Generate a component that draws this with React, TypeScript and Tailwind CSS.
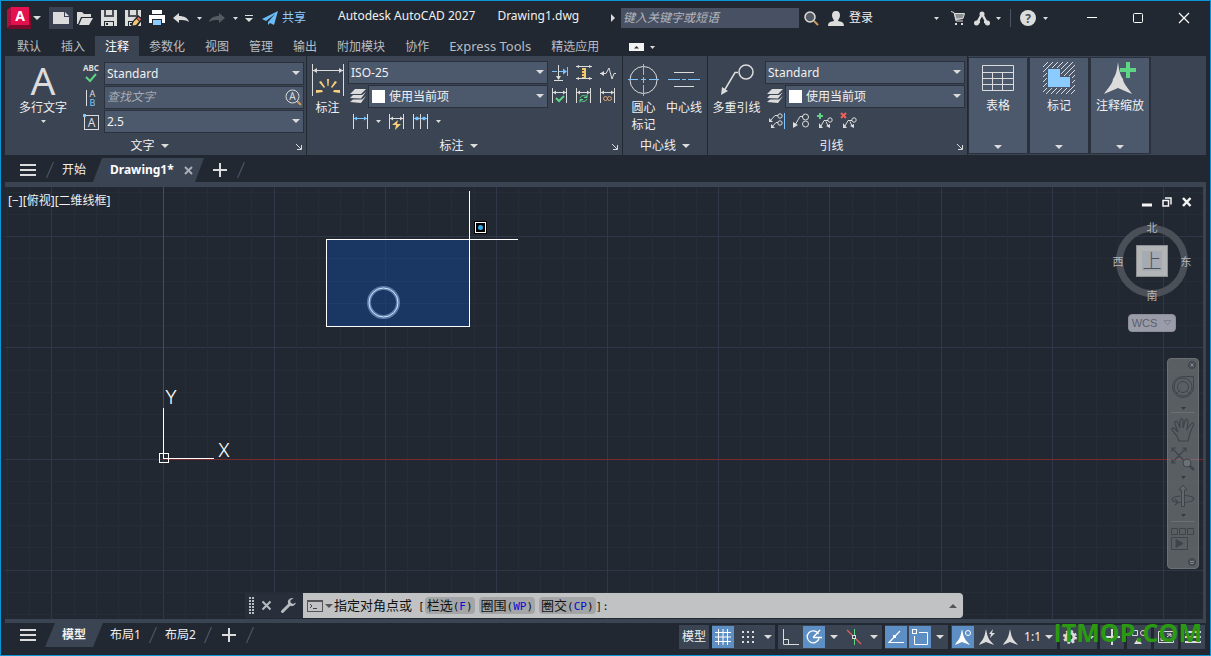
import type { ReactNode } from 'react';

type IconProps = { w: number; h: number; children: ReactNode; className?: string };

const Icon = ({ w, h, children, className }: IconProps) => (
    <svg
        width={w}
        height={h}
        viewBox={`0 0 ${w} ${h}`}
        fill="none"
        stroke="#dcdcdc"
        aria-hidden="true"
        className={`shrink-0 overflow-visible ${className ?? ''}`}>
        {children}
    </svg>
);

const Caret = ({ small = false }: { small?: boolean }) => (
    <svg width={small ? 5 : 8} height={small ? 3 : 4} viewBox="0 0 8 4" preserveAspectRatio="none" aria-hidden="true" className="shrink-0">
        <path d="M0 0H8L4 4Z" fill="#dcdcdc" />
    </svg>
);

type BtnProps = { label: string; className: string; children: ReactNode };

const Btn = ({ label, className, children }: BtnProps) => (
    <button type="button" aria-label={label} className={`flex shrink-0 items-center justify-center ${className}`}>
        {children}
    </button>
);

/* ---------- title bar ---------- */

const Floppy = () => (
    <>
        <path d="M0 0H16V16H0Z" fill="#dcdcdc" stroke="none" />
        <path d="M3 0H13V7H3Z" fill="#4a4f57" stroke="none" />
        <path d="M5 0H11V5H5Z" fill="#dcdcdc" stroke="none" />
        <path d="M3 11H13V16H3Z" fill="#222831" stroke="none" />
        <path d="M4 12H12V16H4Z" fill="#dcdcdc" stroke="none" />
        <path d="M5 13H7V15H5Z" fill="#222831" stroke="none" />
    </>
);

const TitleBar = () => (
    <header className="flex h-[34px] shrink-0 items-center pl-1.5 pr-[3px] text-[#f0f0f0]">
        <Btn label="应用程序菜单" className="h-6 w-6">
            <Icon w={24} h={22}>
                <path d="M0 3L4 0V18L0 21Z" fill="#b01040" stroke="none" />
                <path d="M0 21L4 18H22L24 2V22H2Z" fill="#7c0a2c" stroke="none" />
                <path d="M4 0H22V18H4Z" fill="#e51050" stroke="none" />
                <text x="13" y="14" textAnchor="middle" fontFamily="Noto Sans" fontSize="14" fontWeight="700" fill="#fff" stroke="none">A</text>
            </Icon>
        </Btn>
        <Btn label="菜单" className="w-3"><Caret /></Btn>
        <Btn label="新建" className="ml-1.5 h-[22px] w-6 bg-[#3a4252]">
            <Icon w={16} h={12}>
                <path d="M0 0H11V5H16V12H0Z" fill="#dcdcdc" stroke="none" />
                <path d="M12 0L16 4H12Z" fill="#dcdcdc" stroke="none" />
            </Icon>
        </Btn>
        <Btn label="打开" className="h-6 w-6">
            <Icon w={16} h={13}>
                <path d="M0 0H5L7 2H14V5H4L1 12H0Z" fill="#dcdcdc" stroke="none" />
                <path d="M5 6H16L12 13H2Z" fill="#dcdcdc" stroke="none" />
            </Icon>
        </Btn>
        <Btn label="保存" className="h-6 w-6"><Icon w={16} h={16}><Floppy /></Icon></Btn>
        <Btn label="另存为" className="h-6 w-6">
            <Icon w={16} h={16}>
                <Floppy />
                <path d="M6 17L7 12L13 5L18 9L12 17Z" fill="#222831" stroke="none" />
                <path d="M7.500 15.500L8.500 12L11.500 9L14 11.500L11 15Z" fill="#f5c76b" stroke="none" />
                <path d="M12 8.500L13.500 7L16 9.500L14.500 11Z" fill="#e46a5c" stroke="none" />
            </Icon>
        </Btn>
        <Btn label="打印" className="h-6 w-6">
            <Icon w={16} h={16}>
                <path d="M3 0H13V4H3Z" fill="#fff" stroke="none" />
                <path d="M0 5H16V13H0Z" fill="#fff" stroke="none" />
                <path d="M3 9H13V16H3Z" fill="#222831" stroke="none" />
                <path d="M4 10H12V15H4Z" fill="#8ccbff" stroke="none" />
            </Icon>
        </Btn>
        <Btn label="放弃" className="h-6 w-6">
            <Icon w={16} h={11}>
                <path d="M0 5L6 0V3C11 3 15 5 16 9C13 7 10 7 6 7V10Z" fill="#dcdcdc" stroke="none" />
            </Icon>
        </Btn>
        <Btn label="放弃列表" className="w-3"><Caret small /></Btn>
        <Btn label="重做" className="h-6 w-6">
            <Icon w={16} h={11}>
                <path d="M16 5L10 0V3C5 3 1 5 0 9C3 7 6 7 10 7V10Z" fill="#565b63" stroke="none" />
            </Icon>
        </Btn>
        <Btn label="重做列表" className="w-3"><Caret small /></Btn>
        <Btn label="自定义快速访问工具栏" className="w-4">
            <Icon w={8} h={7}>
                <path d="M0 .5H8" />
                <path d="M0 3H8L4 7Z" fill="#dcdcdc" stroke="none" />
            </Icon>
        </Btn>
        <button type="button" className="ml-[5px] flex shrink-0 items-center gap-1 text-xs text-[#8ccbff]">
            <Icon w={16} h={14}>
                <path d="M16 0L0 8L4 10L13 3L6 11L6 14L8 12L12 14Z" fill="#6bbcf5" stroke="none" />
            </Icon>
            共享
        </button>
        <h1 className="flex min-w-0 flex-1 gap-[22px] overflow-hidden whitespace-nowrap pb-1 pl-8 text-xs">
            <span>Autodesk AutoCAD 2027</span>
            <span>Drawing1.dwg</span>
        </h1>
        <Btn label="折叠搜索" className="w-4">
            <Icon w={4} h={8}><path d="M0 0L4 4L0 8Z" fill="#dcdcdc" stroke="none" /></Icon>
        </Btn>
        <input
            type="text"
            aria-label="搜索"
            placeholder="键入关键字或短语"
            className="h-5 w-[178px] shrink-0 bg-[#485063] px-0.5 pb-0.5 text-xs italic placeholder:text-[#b4b8be]"
        />
        <Btn label="开始搜索" className="h-6 w-6">
            <Icon w={14} h={14}>
                <path d="M10 10L14 14" stroke="#d09a5a" strokeWidth="2" />
                <circle cx="6" cy="6" r="5" fill="#555b64" strokeWidth="1.500" />
            </Icon>
        </Btn>
        <button type="button" className="ml-[5px] flex shrink-0 items-center gap-[5px] text-xs">
            <Icon w={16} h={15}>
                <path d="M8 0C11 0 12 2 12 4.500C12 7 10 9 10 10C13 10.500 16 11 16 15H0C0 11 3 10.500 6 10C6 9 4 7 4 4.500C4 2 5 0 8 0Z" fill="#dcdcdc" stroke="none" />
            </Icon>
            登录
        </button>
        <Btn label="登录菜单" className="ml-[57px] w-3"><Caret small /></Btn>
        <Btn label="应用商店" className="ml-1 h-6 w-6">
            <Icon w={14} h={14}>
                <path d="M0 .5L3 1.500L5 10H12M5 8.500L12 7.500" />
                <path d="M3.500 2.500H13.500L12 7.500L5 8Z" fill="#8b8f94" />
                <path d="M4 12H6V14H4ZM10 12H12V14H10Z" fill="#dcdcdc" stroke="none" />
            </Icon>
        </Btn>
        <Btn label="Autodesk App" className="h-6 w-6">
            <Icon w={16} h={15}>
                <path d="M8 3L3 12M8 3L13 12M3 11H6M10 11H13" strokeWidth="2.500" />
                <g fill="#dcdcdc" stroke="none">
                    <circle cx="8" cy="3" r="2.500" />
                    <circle cx="2.500" cy="12" r="2.500" />
                    <circle cx="13.500" cy="12" r="2.500" />
                </g>
            </Icon>
        </Btn>
        <Btn label="App 菜单" className="w-2"><Caret small /></Btn>
        <div className="ml-2 mr-[5px] h-[18px] w-px bg-[#4c5566]" />
        <Btn label="帮助" className="h-6 w-6">
            <Icon w={16} h={16}>
                <circle cx="8" cy="8" r="8" fill="#dcdcdc" stroke="none" />
                <text x="8" y="12.500" textAnchor="middle" fontFamily="Noto Sans" fontSize="12" fontWeight="700" fill="#4a4f57" stroke="none">?</text>
            </Icon>
        </Btn>
        <Btn label="帮助菜单" className="w-2.5"><Caret small /></Btn>
        <div className="ml-[19px] flex">
            <Btn label="最小化" className="h-8 w-[46px]">
                <Icon w={10} h={10}><path d="M0 4.500H10" stroke="#fff" /></Icon>
            </Btn>
            <Btn label="最大化" className="h-8 w-[46px]">
                <Icon w={10} h={10}><rect x=".5" y=".5" width="9" height="9" rx="1" stroke="#fff" /></Icon>
            </Btn>
            <Btn label="关闭" className="h-8 w-[46px]">
                <Icon w={10} h={10}><path d="M0 0L10 10M10 0L0 10" stroke="#fff" strokeWidth="1.200" /></Icon>
            </Btn>
        </div>
    </header>
);

/* ---------- ribbon ---------- */

const ribbonTabs = ['默认', '插入', '注释', '参数化', '视图', '管理', '输出', '附加模块', '协作', 'Express Tools', '精选应用'];

const RibbonTabs = () => (
    <nav className="flex h-[21px] shrink-0 items-end pl-1.5 text-xs">
        {ribbonTabs.map((tab) => (
            <button
                key={tab}
                type="button"
                className={`h-5 shrink-0 px-2.5 pt-0.5 ${tab === '注释' ? 'bg-[#3b4453] text-white' : 'text-[#b9bdc3]'} ${tab === 'Express Tools' ? 'text-[13px]' : ''}`}>
                {tab}
            </button>
        ))}
        <Btn label="最小化功能区" className="ml-5 h-5 gap-1.5 pt-0.5">
            <Icon w={15} h={8}>
                <path d="M0 0H15V8H0Z" fill="#f4f4f4" stroke="none" />
                <path d="M5 5.500H10L7.500 3Z" fill="#333" stroke="none" />
            </Icon>
            <Caret small />
        </Btn>
    </nav>
);

type ComboProps = { label: string; value: string; swatch?: boolean; className: string };

const Combo = ({ label, value, swatch = false, className }: ComboProps) => (
    <div className={`relative h-[23px] shrink-0 ${className}`}>
        <select
            aria-label={label}
            className={`block h-full w-full appearance-none border border-[#2a313d] bg-[#4c586b] text-xs text-[#f0f0f0] ${swatch ? 'pl-5' : 'pl-0.5'}`}>
            <option>{value}</option>
        </select>
        {swatch && <span className="pointer-events-none absolute left-1 top-[5px] h-[13px] w-[13px] bg-white" />}
        <span className="pointer-events-none absolute right-1 top-[9px] flex"><Caret /></span>
    </div>
);

type PanelProps = { title: string; menu?: boolean; launcher?: boolean; className: string; children: ReactNode };

const Panel = ({ title, menu = false, launcher = false, className, children }: PanelProps) => (
    <section className={`flex shrink-0 flex-col border-r border-[#222831] ${className}`}>
        <div className="flex h-20 pt-[5px]">{children}</div>
        <div className={`relative flex flex-1 items-center justify-center ${launcher ? 'pr-3' : ''}`}>
            <button type="button" className="flex items-center gap-1.5 text-xs text-[#f0f0f0]">
                {title}
                {menu && <Caret />}
            </button>
            {launcher && (
                <button type="button" aria-label={`${title}设置`} className="absolute right-1 top-2">
                    <Icon w={6} h={6}><path d="M0 0L5 5M5.500 1V5.500H1" /></Icon>
                </button>
            )}
        </div>
    </section>
);

type BigProps = { lines: string[]; className: string; icon: ReactNode; children?: ReactNode };

const BigButton = ({ lines, className, icon, children }: BigProps) => (
    <button type="button" className={`flex shrink-0 flex-col items-center whitespace-nowrap text-xs leading-[17px] text-[#f0f0f0] ${className}`}>
        <span className="flex h-[38px] items-center">{icon}</span>
        {lines.map((line) => <span key={line}>{line}</span>)}
        {children}
    </button>
);

const Layers = () => (
    <Icon w={16} h={16}>
        <path d="M5 0H16L11 5H0ZM0 9L3 6H12L16 3L11 9.500ZM0 13L3 10.500H12L16 7L11 14Z" fill="#dcdcdc" stroke="none" />
    </Icon>
);

/* extension lines with the arrowed dimension line between them */
const DimFrame = ({ color = '#dcdcdc' }: { color?: string }) => (
    <>
        <path d="M.5 0V15M14.500 0V15" />
        <path d="M1 4.500H14" stroke={color} />
        <path d="M1 4.500L4 2.500V6.500ZM14 4.500L11 2.500V6.500Z" fill={color} stroke="none" />
    </>
);

const TextPanel = () => (
    <Panel title="文字" menu launcher className="w-[302px]">
        <BigButton
            lines={['多行文字']}
            className="w-[76px]"
            icon={
                <Icon w={30} h={32}>
                    <text x="15" y="31" textAnchor="middle" fontFamily="Noto Sans" fontSize="39" fill="#dcdcdc" stroke="none">A</text>
                </Icon>
            }>
            <span className="flex h-2.5 items-center"><Caret small /></span>
        </BigButton>
        <div className="flex flex-col gap-px pt-px">
            <div className="flex items-center gap-1">
                <Btn label="拼写检查" className="w-[19px]">
                    <Icon w={18} h={18}>
                        <text x="9" y="6" textAnchor="middle" fontFamily="Noto Sans" fontSize="8" fontWeight="700" fill="#dcdcdc" stroke="none">ABC</text>
                        <path d="M4 12L8 16L14 9" stroke="#5ed584" strokeWidth="2" />
                    </Icon>
                </Btn>
                <Combo label="文字样式" value="Standard" className="w-[200px]" />
            </div>
            <div className="flex items-center gap-1">
                <Btn label="文字对齐" className="w-[19px]">
                    <Icon w={12} h={16}>
                        <path d="M1.500 0V16" />
                        <text x="7.500" y="7" textAnchor="middle" fontFamily="Noto Sans" fontSize="9" fill="#dcdcdc" stroke="none">A</text>
                        <text x="7.500" y="16" textAnchor="middle" fontFamily="Noto Sans" fontSize="9" fill="#7cc4ff" stroke="none">B</text>
                    </Icon>
                </Btn>
                <div className="relative h-[23px] w-[200px]">
                    <input
                        type="text"
                        aria-label="查找文字"
                        placeholder="查找文字"
                        className="block h-full w-full border border-[#2a313d] bg-[#4c586b] pb-0.5 pl-0.5 text-xs italic text-[#f0f0f0] placeholder:text-[#a5abb4]"
                    />
                    <button type="button" aria-label="查找" className="absolute right-0.5 top-[3px]">
                        <Icon w={17} h={17}>
                            <path d="M12 12L16 16" stroke="#d09a5a" strokeWidth="2" />
                            <circle cx="7.500" cy="7.500" r="6.500" />
                            <text x="7.500" y="11" textAnchor="middle" fontFamily="Noto Sans" fontSize="10" fill="#dcdcdc" stroke="none">A</text>
                        </Icon>
                    </button>
                </div>
            </div>
            <div className="flex items-center gap-1">
                <Btn label="注释性" className="w-[19px]">
                    <Icon w={16} h={16}>
                        <rect x="1.500" y="1.500" width="14" height="14" />
                        <text x="8.500" y="13" textAnchor="middle" fontFamily="Noto Sans" fontSize="12" fill="#dcdcdc" stroke="none">A</text>
                        <path d="M0 0H3V3H0Z" fill="#7cc4ff" stroke="none" />
                    </Icon>
                </Btn>
                <Combo label="文字高度" value="2.5" className="w-[200px]" />
            </div>
        </div>
    </Panel>
);

const DimensionPanel = () => (
    <Panel title="标注" menu launcher className="w-[316px]">
        <BigButton
            lines={['标注']}
            className="w-[41px]"
            icon={
                <Icon w={32} h={32}>
                    <path d="M.5 0V32M31.500 0V32M1 6.500H31" />
                    <path d="M1 6.500L5 4V9ZM31 6.500L27 4V9Z" fill="#dcdcdc" stroke="none" />
                    <g fill="#f8cf7a" stroke="none">
                        <path d="M15 15H17L16.500 22H15.500ZM7 18L9 17L13 23L12 24ZM25 18L23 17L19 23L20 24ZM4 26L10 26L11 28L4 29ZM28 26L22 26L21 28L28 29Z" />
                    </g>
                </Icon>
            }
        />
        <div className="flex flex-col gap-px">
            <Combo label="标注样式" value="ISO-25" className="w-[200px]" />
            <div className="flex items-center gap-0.5">
                <Btn label="标注图层" className="ml-0.5 w-4"><Layers /></Btn>
                <Combo label="图层" value="使用当前项" swatch className="w-[180px]" />
            </div>
            <div className="flex h-6 items-center pl-1">
                <Btn label="线性" className="w-4"><Icon w={15} h={15}><DimFrame color="#7cc4ff" /></Icon></Btn>
                <Btn label="标注类型" className="w-5"><Caret small /></Btn>
                <Btn label="快速标注" className="w-4">
                    <Icon w={15} h={15}>
                        <DimFrame />
                        <path d="M9 6L3 11H7L6 16L12 10H8Z" fill="#f8cf7a" stroke="none" />
                    </Icon>
                </Btn>
                <Btn label="连续" className="ml-2 w-4">
                    <Icon w={15} h={15}>
                        <DimFrame color="#7cc4ff" />
                        <path d="M7.500 0V15" />
                        <path d="M4 2.500L7 4.500L4 6.500ZM11 2.500L8 4.500L11 6.500Z" fill="#7cc4ff" stroke="none" />
                    </Icon>
                </Btn>
                <Btn label="连续类型" className="w-5"><Caret small /></Btn>
            </div>
        </div>
        <div className="grid h-[46px] grid-cols-3 grid-rows-2 items-center">
            <Btn label="打断" className="w-6">
                <Icon w={16} h={16}>
                    <path d="M0 6.500H5M7 6.500H12M15.500 2V11" stroke="#7cc4ff" />
                    <path d="M11 3.500L15 6.500L11 9.500Z" fill="#7cc4ff" stroke="none" />
                    <path d="M6.500 0V12M2 15.500H11" />
                    <path d="M4 11H9L6.500 15Z" fill="#dcdcdc" stroke="none" />
                </Icon>
            </Btn>
            <Btn label="调整间距" className="w-6">
                <Icon w={16} h={16}>
                    <path d="M0 1.500H16M0 13.500H16" />
                    <path d="M0 1.500L3 0V3ZM16 1.500L13 0V3ZM0 13.500L3 12V15ZM16 13.500L13 12V15Z" fill="#dcdcdc" stroke="none" />
                    <path d="M6 3H10V13H6Z" fill="#f5c76b" stroke="none" />
                    <path d="M6 5.500H8M6 8.500H8M6 11.500H8" stroke="#3b4453" />
                </Icon>
            </Btn>
            <Btn label="折弯标注" className="w-6">
                <Icon w={16} h={14}>
                    <path d="M0 7.500H6L9 2L12 13L14 7.500H16" />
                    <path d="M0 7.500L4 5V10Z" fill="#dcdcdc" stroke="none" />
                </Icon>
            </Btn>
            <Btn label="检验" className="w-6">
                <Icon w={16} h={16}><DimFrame /><path d="M4 10L7 13L12 8" stroke="#5ed584" strokeWidth="2" /></Icon>
            </Btn>
            <Btn label="更新" className="w-6">
                <Icon w={16} h={16}>
                    <DimFrame />
                    <path d="M4 10C5 7 9 7 11 9M11 11C10 14 6 14 4 12M11 6.500V9.500H8M4 14.500V11.500H7" stroke="#5ed584" />
                </Icon>
            </Btn>
            <Btn label="重新关联" className="w-6">
                <Icon w={16} h={16}>
                    <DimFrame />
                    <circle cx="5.500" cy="10.500" r="2" stroke="#e0a070" />
                    <circle cx="9.500" cy="10.500" r="2" stroke="#e0a070" />
                </Icon>
            </Btn>
        </div>
    </Panel>
);

const CenterPanel = () => (
    <Panel title="中心线" menu className="w-[85px]">
        <BigButton
            lines={['圆心', '标记']}
            className="w-[41px]"
            icon={
                <Icon w={32} h={32}>
                    <circle cx="15.500" cy="16" r="13.500" />
                    <path d="M15.500 0V11M15.500 13V19M15.500 21V32M0 15.500H10M13 15.500H18M21 15.500H31" stroke="#7cc4ff" />
                </Icon>
            }
        />
        <BigButton
            lines={['中心线']}
            className="w-10"
            icon={
                <Icon w={32} h={32}>
                    <path d="M6 8.500H26M6 22.500H26" />
                    <path d="M0 15.500H12M14 15.500H18M20 15.500H32" stroke="#7cc4ff" />
                </Icon>
            }
        />
    </Panel>
);

const LeaderPanel = () => (
    <Panel title="引线" launcher className="w-[260px]">
        <BigButton
            lines={['多重引线']}
            className="w-[57px]"
            icon={
                <Icon w={32} h={32}>
                    <path d="M17 8.500H14L3 27" strokeWidth="1.500" />
                    <circle cx="25" cy="8" r="7" strokeWidth="1.500" />
                    <path d="M1 23L7 27L0 31Z" fill="#dcdcdc" stroke="none" />
                </Icon>
            }
        />
        <div className="flex flex-col gap-px">
            <Combo label="多重引线样式" value="Standard" className="w-[200px]" />
            <div className="flex items-center gap-0.5">
                <Btn label="引线图层" className="ml-0.5 w-4"><Layers /></Btn>
                <Combo label="图层" value="使用当前项" swatch className="w-[180px]" />
            </div>
            <div className="flex h-6 items-center gap-2 pl-1">
                <Btn label="对齐" className="w-4">
                    <Icon w={16} h={16}>
                        <path d="M9 2.500H6L1 8M9 9.500H7L3 14" />
                        <circle cx="11" cy="3" r="2.200" />
                        <circle cx="11" cy="10" r="2.200" />
                        <path d="M0 5V9H4ZM2 11V15H6Z" fill="#dcdcdc" stroke="none" />
                        <path d="M15.500 0V16" stroke="#7cc4ff" />
                    </Icon>
                </Btn>
                <Btn label="合并" className="w-4">
                    <Icon w={16} h={16}>
                        <path d="M10 3.500H7L2 12" />
                        <circle cx="12.500" cy="4" r="3" />
                        <circle cx="12.500" cy="11" r="3" />
                        <path d="M0 9L5 12L0 15Z" fill="#dcdcdc" stroke="none" />
                    </Icon>
                </Btn>
                <Btn label="添加引线" className="w-4">
                    <Icon w={16} h={16}>
                        <path d="M11 7.500H7L4 13M9 8.500L11 13" />
                        <circle cx="13" cy="7" r="2.200" />
                        <path d="M2 10V15H6ZM9 13L13 11V15Z" fill="#dcdcdc" stroke="none" />
                        <path d="M3 0V6M0 3H6" stroke="#5ed584" strokeWidth="2" />
                    </Icon>
                </Btn>
                <Btn label="删除引线" className="w-4">
                    <Icon w={16} h={16}>
                        <path d="M11 7.500H7L4 13M9 8.500L11 13" />
                        <circle cx="13" cy="7" r="2.200" />
                        <path d="M2 10V15H6ZM9 13L13 11V15Z" fill="#dcdcdc" stroke="none" />
                        <path d="M0 0L5 5M5 0L0 5" stroke="#f0605c" strokeWidth="2" />
                    </Icon>
                </Btn>
            </div>
        </div>
    </Panel>
);

const scalePath = 'M14 0C15 8 16 13 19 17C19 21 24 26 28 32L14 26L0 32C4 26 9 21 9 17C12 13 13 8 14 0Z';

const collapsed = [
    {
        name: '表格',
        icon: (
            <Icon w={32} h={32}>
                <path d="M.5 3.500H31.500V28.500H.5ZM.5 10.500H31.500M.5 16.500H31.500M.5 22.500H31.500M10.500 10.500V28.500M20.500 10.500V28.500" />
            </Icon>
        ),
    },
    {
        name: '标记',
        icon: (
            <Icon w={32} h={32}>
                <defs>
                    <pattern id="hatch" width="5" height="5" patternUnits="userSpaceOnUse">
                        <path d="M0 5L5 0" stroke="#dcdcdc" />
                    </pattern>
                </defs>
                <rect width="32" height="32" fill="url(#hatch)" stroke="none" />
                <path d="M4 6H18V14H29V26H4Z" fill="#4c586b" stroke="none" />
                <path d="M5 7H17V15H27V25H5Z" fill="#8ccbff" stroke="none" />
            </Icon>
        ),
    },
    {
        name: '注释缩放',
        icon: (
            <Icon w={32} h={32}>
                <path d={scalePath} fill="#dcdcdc" stroke="none" />
                <path d="M22 0H26V6H32V10H26V16H22V10H16V6H22Z" fill="#5ed584" stroke="none" />
            </Icon>
        ),
    },
];

const Ribbon = () => (
    <div className="mx-1 flex h-[99px] shrink-0 bg-[#3b4453]">
        <TextPanel />
        <DimensionPanel />
        <CenterPanel />
        <LeaderPanel />
        {collapsed.map(({ name, icon }) => (
            <button
                key={name}
                type="button"
                className="mt-px flex h-[97px] w-[61px] shrink-0 flex-col items-center border border-r-2 border-[#2a313d] bg-[#4c586b] py-1 text-xs text-[#f0f0f0]">
                {icon}
                <span className="mt-1 whitespace-nowrap">{name}</span>
                <span className="mt-auto flex"><Caret /></span>
            </button>
        ))}
    </div>
);

/* ---------- tab strips above and below the drawing ---------- */

const Slash = () => (
    <Icon w={8} h={16}><path d="M.5 16L7.500 0" stroke="#4a5261" strokeWidth="1.200" /></Icon>
);

const Hamburger = () => (
    <Icon w={16} h={12}><path d="M0 1H16M0 6H16M0 11H16" strokeWidth="2" /></Icon>
);

const Plus = () => (
    <Icon w={14} h={14}><path d="M7 0V14M0 7H14" strokeWidth="2" /></Icon>
);

const FileTabs = () => (
    <nav className="flex h-[27px] shrink-0 items-end pl-[19px] text-xs">
        <div className="flex h-6 items-center">
            <Btn label="文件菜单" className="mr-2.5 w-4"><Hamburger /></Btn>
            <Slash />
            <button type="button" className="ml-2 mr-[7px] text-[#f0f0f0]">开始</button>
        </div>
        <div className="flex h-6 w-[111px] items-center bg-[#3b4453] pl-[17px] text-white [clip-path:polygon(9px_0,100%_0,102px_100%,0_100%)]">
            <button type="button" className="w-[72px] text-left font-bold">Drawing1*</button>
            <Btn label="关闭图形" className="h-4 w-3">
                <Icon w={9} h={9}><path d="M1 1L8 8M8 1L1 8" stroke="#a9aeb8" strokeWidth="2" /></Icon>
            </Btn>
        </div>
        <div className="flex h-6 items-center">
            <Btn label="新图形" className="ml-[9px] mr-2.5 w-3.5"><Plus /></Btn>
            <Slash />
        </div>
    </nav>
);

/* ---------- model space ---------- */

const origin = { x: 158, y: 272 };
const minorStep = 22.23;
const steps = Array.from({ length: 140 }, (_, i) => i - 20);

const ModelSpace = () => (
    <svg className="absolute inset-0 h-full w-full" fill="none" aria-hidden="true">
        <g shapeRendering="crispEdges">
            {steps.map((i) => {
                const x = Math.floor(origin.x + i * minorStep) + 0.5;
                const y = Math.floor(origin.y + i * minorStep) + 0.5;
                const color = i % 5 === 0 ? '#2f3748' : '#262d37';
                return (
                    <g key={i} stroke={color}>
                        <line x1={x} y1="0" x2={x} y2="100%" />
                        <line x1="0" y1={y} x2="100%" y2={y} />
                    </g>
                );
            })}
            <line x1="158.5" y1="0" x2="158.5" y2="221" stroke="#1f6a26" />
            <line x1="158" y1="272.5" x2="100%" y2="272.5" stroke="#7a2a2e" />
            <path d="M158.500 221V271.500H209M154.500 266.500H163.500V275.500H154.500Z" stroke="#fff" />
            <rect x="321.500" y="52.500" width="143" height="87" fill="#1a3763" stroke="#fff" />
            <path d="M380.500 53V139M322 71.500H464M322 94.500H464M322 116.500H464" stroke="#203c69" />
            <path d="M464.500 4V53M464 52.500H513" stroke="#fff" />
            <rect x="469" y="34" width="13" height="13" fill="#000" />
            <rect x="470.500" y="35.500" width="10" height="10" stroke="#fff" />
        </g>
        <circle cx="475.500" cy="40.500" r="2.500" fill="#36a9e1" />
        <circle cx="378.500" cy="115.500" r="14.500" stroke="#5b7cab" strokeWidth="4" />
        <circle cx="378.500" cy="115.500" r="14.500" stroke="#d4e4fa" />
        <g fontFamily="Inter" fontSize="18" fontWeight="300" fill="#fff" textAnchor="middle">
            <text x="166" y="217">Y</text>
            <text x="219" y="270">X</text>
        </g>
    </svg>
);

const ViewCube = () => (
    <div className="absolute right-2.5 top-[33px] flex flex-col items-center gap-3">
        <svg width="82" height="82" fontFamily="'Noto Sans CJK SC'" fontSize="11" textAnchor="middle" fill="#b4b6b8" className="overflow-visible">
            <circle cx="41" cy="41" r="32.500" fill="none" stroke="#4a4f58" strokeWidth="7" />
            <rect x="25.500" y="25.500" width="31" height="31" fill="#b3b4b5" stroke="#8c8e90" />
            <rect x="31" y="31" width="20" height="20" fill="#a6abb3" />
            <text x="41" y="48" fontSize="19" fontWeight="300" fill="#4a525e">上</text>
            <text x="41" y="12">北</text>
            <text x="41" y="80">南</text>
            <text x="7" y="46">西</text>
            <text x="75" y="46">东</text>
        </svg>
        <button type="button" className="flex h-[18px] w-12 items-center justify-center gap-1.5 rounded border border-[#8b8e99] bg-[#9a9ca9] font-[Liberation_Sans] text-[11px] text-[#5c606b]">
            WCS
            <Icon w={9} h={6}><path d="M1 .5H8L4.500 5Z" stroke="#7c8090" /></Icon>
        </button>
    </div>
);

const NavCaret = () => (
    <Icon w={5} h={3}><path d="M0 0H5L2.500 3Z" fill="#343a42" stroke="none" /></Icon>
);

const NavBar = () => (
    <div className="absolute right-1 top-[171px] flex w-8 flex-col items-center rounded border border-[#6c7074] bg-[#8f9496]/50 [&_svg]:stroke-[#3e444c]">
        <Btn label="关闭导航栏" className="h-[11px] w-full justify-end pr-0.5">
            <Icon w={8} h={8} className="ml-auto">
                <circle cx="4" cy="4" r="3.500" fill="#4a5057" />
                <path d="M2.500 2.500L5.500 5.500M5.500 2.500L2.500 5.500" stroke="#858a8e" />
            </Icon>
        </Btn>
        <Btn label="全导航控制盘" className="h-[34px] w-full">
            <Icon w={24} h={24}>
                <path d="M12 1.500H22.500V12A10.500 10.500 0 1 1 12 1.500Z" />
                <circle cx="12" cy="12" r="9" />
                <circle cx="12" cy="12" r="5.500" />
                <path d="M8 16L5 19M16 16L19 19" />
            </Icon>
        </Btn>
        <Btn label="控制盘选项" className="h-2 w-full"><NavCaret /></Btn>
        <div className="h-px w-6 bg-[#6a6f73]" />
        <Btn label="平移" className="h-[34px] w-full">
            <Icon w={24} h={24}>
                <path d="M8 23L6 18L1 12C0 10 2 9 4 11L7 14L4 6C3 3 6 2 7 5L9 10L9 3C9 0 12 0 12 3V10L14 3C15 0 17 1 17 4L16 11L20 6C21 4 24 5 22 8L19 15L17 23Z" strokeWidth="1.200" />
            </Icon>
        </Btn>
        <Btn label="范围缩放" className="h-6 w-full">
            <Icon w={24} h={24}>
                <path d="M1 1L15 16M15 1L1 16M1 5V1H5M11 1H15V5M1 12V16H5" strokeWidth="1.200" />
                <circle cx="16" cy="16" r="4" fill="#6c7175" />
                <path d="M19 19L23 23" strokeWidth="2.500" />
            </Icon>
        </Btn>
        <Btn label="缩放选项" className="h-3 w-full"><NavCaret /></Btn>
        <Btn label="动态观察" className="h-[26px] w-full">
            <Icon w={24} h={24}>
                <path d="M9 12C-2 13 -1 18 9 18.500H12C26 18 26 12 14 11.500M4 15L7 18.500L4 21" strokeWidth="1.200" />
                <path d="M10.500 22.500V6H8L12 1L16 6H13.500V22.500Z" fill="#62676b" />
            </Icon>
        </Btn>
        <Btn label="动态观察选项" className="h-3 w-full"><NavCaret /></Btn>
        <div className="h-px w-6 bg-[#6a6f73]" />
        <Btn label="ShowMotion" className="h-[34px] w-full">
            <Icon w={24} h={24}>
                <path d="M.5 1.500H6.500V7.500H.5ZM8.500 1.500H14.500V7.500H8.500ZM16.500 1.500H22.500V7.500H16.500ZM.5 10.500H16.500V22.500H.5Z" />
                <path d="M5 12.500L12 16.500L5 20.500Z" fill="#3e444c" />
            </Icon>
        </Btn>
        <Btn label="导航栏选项" className="h-3 w-full pr-0.5">
            <Icon w={8} h={8} className="ml-auto">
                <circle cx="4" cy="4" r="3.500" fill="#4a5057" />
                <path d="M2 3.500H6M2.500 5.500H5.500" stroke="#858a8e" />
            </Icon>
        </Btn>
    </div>
);

const options = [
    { text: '栏选', key: 'F' },
    { text: '圈围', key: 'WP' },
    { text: '圈交', key: 'CP' },
];

const CommandLine = () => (
    <div className="absolute inset-x-60 bottom-px flex h-[25px]">
        <div className="flex w-[58px] shrink-0 items-center bg-[#282f3b] pl-1">
            <Icon w={5} h={17}>
                <path d="M1 0V17M4 0V17" stroke="#b8bbbf" strokeWidth="2" strokeDasharray="2 1" />
            </Icon>
            <Btn label="关闭命令行" className="ml-1.5 h-5 w-3">
                <Icon w={9} h={9}><path d="M.5 .5L8.500 8.500M8.500 .5L.5 8.500" stroke="#b8bbbf" strokeWidth="2" /></Icon>
            </Btn>
            <Btn label="自定义" className="ml-1.5 h-5 w-5">
                <Icon w={15} h={15}>
                    <path d="M1.500 13.500L8.500 6.500" stroke="#b8bbbf" strokeWidth="3" strokeLinecap="round" />
                    <path d="M12.500 .5A4 4 0 1 0 14.800 4.500L12 6L9.500 4.500V2Z" fill="#b8bbbf" stroke="none" />
                </Icon>
            </Btn>
        </div>
        <div className="flex min-w-0 flex-1 items-center rounded-r-sm bg-[#c0c2c4] px-1 font-['DejaVu_Sans_Mono','Noto_Sans_CJK_SC',monospace] text-[13px] text-[#111]">
            <Btn label="最近使用的命令" className="h-5">
                <Icon w={26} h={12}>
                    <rect x=".5" y=".5" width="15" height="11" stroke="#555" />
                    <path d="M0 1H16" stroke="#555" strokeWidth="2" />
                    <path d="M3 4L5 6L3 8M6 8.500H10" stroke="#444" />
                    <path d="M18 4H26L22 8Z" fill="#555" stroke="none" />
                </Icon>
            </Btn>
            <div className="ml-px flex items-baseline whitespace-nowrap leading-[17px]">
                <span>指定对角点或</span>
                <span className="ml-1.5 text-[11px]">[</span>
                <span className="flex items-baseline gap-1">
                    {options.map(({ text, key }) => (
                        <button key={key} type="button" className="h-[17px] rounded bg-[#a3a5a7] px-[2px]">
                            {text}
                            <span className="text-[11px]">(<span className="text-[#0a0ad0]">{key}</span>)</span>
                        </button>
                    ))}
                </span>
                <span className="text-[11px]">]:</span>
            </div>
            <input type="text" aria-label="命令" className="min-w-0 flex-1 bg-transparent pl-1" />
            <Btn label="命令历史" className="h-5 w-3">
                <Icon w={8} h={4}><path d="M0 4H8L4 0Z" fill="#555" stroke="none" /></Icon>
            </Btn>
        </div>
    </div>
);

const Canvas = () => (
    <main className="relative mx-1 min-h-0 flex-1 overflow-hidden border-r-[3px] border-[#3b4453] bg-[#222831]">
        <ModelSpace />
        <div className="absolute left-[3px] top-[5px] whitespace-nowrap text-xs leading-[18px] text-[#f0f0f0]">[−][俯视][二维线框]</div>
        <div className="absolute right-[11px] top-2.5 flex gap-2.5">
            <Btn label="最小化视口" className="h-2.5 w-2.5"><Icon w={10} h={10}><path d="M0 8H10" stroke="#f4f4f4" strokeWidth="3" /></Icon></Btn>
            <Btn label="还原视口" className="h-2.5 w-2.5">
                <Icon w={10} h={10}><path d="M1 3.500H6.500V9H1ZM3 1H9V7.500" stroke="#f4f4f4" strokeWidth="1.500" /></Icon>
            </Btn>
            <Btn label="关闭视口" className="h-2.5 w-2.5"><Icon w={10} h={10}><path d="M1 1L8.500 9M8.500 1L1 9" stroke="#f4f4f4" strokeWidth="2.500" /></Icon></Btn>
        </div>
        <ViewCube />
        <NavBar />
        <CommandLine />
    </main>
);

/* ---------- status bar ---------- */

const Group = ({ className, children }: { className?: string; children: ReactNode }) => (
    <div className={`flex h-6 shrink-0 items-center bg-[#3b4453] ${className ?? ''}`}>{children}</div>
);

const ScaleIcon = ({ color = '#dcdcdc', children }: { color?: string; children?: ReactNode }) => (
    <Icon w={16} h={16}>
        <path d="M7 0C8 4 8 6 9.500 9C10 11 13 13 15 16L7 13L0 16C1 13 4 11 4.500 9C6 6 6 4 7 0Z" fill={color} stroke="none" />
        {children}
    </Icon>
);

const StatusBar = () => (
    <footer className="flex h-8 shrink-0 pl-[19px] pr-[5px] text-xs text-[#f0f0f0]">
        <div className="flex h-6 shrink-0 items-center">
            <Btn label="布局菜单" className="mr-[9px] w-4"><Hamburger /></Btn>
            <button type="button" className="h-6 w-[58px] bg-[#3b4453] font-bold [clip-path:polygon(10px_0,100%_0,48px_100%,0_100%)]">模型</button>
            <button type="button" className="ml-[7px] mr-2">布局1</button>
            <Slash />
            <button type="button" className="mx-2">布局2</button>
            <Slash />
            <Btn label="新建布局" className="mx-2.5 w-3.5"><Plus /></Btn>
            <Slash />
        </div>
        <div className="ml-auto flex gap-[3px] pt-0.5">
            <Group><button type="button" className="w-[30px]">模型</button></Group>
            <Group>
                <Btn label="栅格" className="h-[22px] w-[22px] bg-[#5e8fc4]">
                    <Icon w={16} h={16}><path d="M3.500 0V16M8 0V16M12.500 0V16M0 3.500H16M0 8H16M0 12.500H16" stroke="#fff" /></Icon>
                </Btn>
                <Btn label="捕捉" className="h-6 w-7">
                    <Icon w={12} h={12}><path d="M0 1H12M0 6H12M0 11H12" strokeWidth="2" strokeDasharray="2 3" /></Icon>
                </Btn>
                <Btn label="捕捉设置" className="h-6 w-[13px] pr-0.5"><Caret /></Btn>
            </Group>
            <Group className="pl-px">
                <Btn label="正交" className="h-6 w-6">
                    <Icon w={16} h={16}><path d="M.5 0V15.500H16M.5 10.500H5.500V15.500" /></Icon>
                </Btn>
                <Btn label="极轴追踪" className="h-[22px] w-[22px] bg-[#5e8fc4]">
                    <Icon w={16} h={16}>
                        <path d="M12.500 5A6 6 0 1 0 13 9.500M7 8.500H16M7 8.500L14 1" stroke="#fff" strokeWidth="1.300" />
                    </Icon>
                </Btn>
                <Btn label="极轴设置" className="h-6 w-[18px]"><Caret /></Btn>
                <Btn label="等轴测草图" className="h-6 w-[22px]">
                    <Icon w={14} h={16}>
                        <path d="M7.500 0V16" stroke="#5ed584" />
                        <path d="M0 1L14 15" stroke="#e0605c" strokeWidth="1.200" />
                        <rect x="5.500" y="6.500" width="3" height="3" fill="#3b4453" />
                    </Icon>
                </Btn>
                <Btn label="等轴测设置" className="h-6 w-[17px]"><Caret /></Btn>
            </Group>
            <Group>
                <Btn label="对象捕捉追踪" className="h-[22px] w-[22px] bg-[#5e8fc4]">
                    <Icon w={16} h={14}>
                        <path d="M12 1L1 12.500H16" stroke="#fff" strokeWidth="1.200" />
                        <path d="M5 5H8V8H5Z" fill="#fff" stroke="none" />
                    </Icon>
                </Btn>
                <Btn label="对象捕捉" className="ml-0.5 h-[22px] w-[22px] bg-[#5e8fc4]">
                    <Icon w={16} h={16}>
                        <path d="M7 3.500H15.500V15.500H2.500V7" stroke="#fff" />
                        <rect x=".5" y=".5" width="4" height="4" stroke="#fff" />
                    </Icon>
                </Btn>
                <Btn label="捕捉选项" className="h-6 w-[17px]"><Caret /></Btn>
            </Group>
            <Group className="pl-px">
                <Btn label="注释可见性" className="h-[22px] w-[22px] bg-[#5e8fc4]">
                    <ScaleIcon color="#fff"><circle cx="13" cy="4" r="2.500" stroke="#fff" /></ScaleIcon>
                </Btn>
                <Btn label="自动缩放" className="h-6 w-[26px]">
                    <ScaleIcon><path d="M14 0L10 5H12L11 9L16 4H13Z" fill="#dcdcdc" stroke="none" /></ScaleIcon>
                </Btn>
                <Btn label="注释比例" className="h-6 w-[22px]"><ScaleIcon /></Btn>
                <button type="button" className="flex h-6 w-[35px] items-center justify-end gap-1 whitespace-nowrap pr-1">1:1<Caret /></button>
            </Group>
            <Group>
                <Btn label="切换工作空间" className="h-6 w-[37px] gap-3">
                    <Icon w={14} h={14}>
                        <circle cx="7" cy="7" r="4" strokeWidth="3" />
                        <circle cx="7" cy="7" r="6" strokeWidth="2" strokeDasharray="2.400 2.300" />
                    </Icon>
                    <Caret small />
                </Btn>
            </Group>
            <Group><Btn label="注释监视器" className="h-6 w-6"><Icon w={16} h={16}><path d="M8 0V16M0 8H16" strokeWidth="2" /></Icon></Btn></Group>
            <Group>
                <Btn label="隔离对象" className="h-6 w-6">
                    <Icon w={16} h={16}>
                        <path d="M1.500 1.500H6.500V6.500H1.500Z" />
                        <circle cx="12" cy="4" r="2.500" />
                        <path d="M7 9L11 15H3Z" fill="#dcdcdc" stroke="none" />
                    </Icon>
                </Btn>
            </Group>
            <Group>
                <Btn label="全屏显示" className="h-6 w-6">
                    <Icon w={16} h={14}><path d="M.5 1.500H15.500V12.500H.5ZM9 4H13V7M13 4L9 7M3 8V10.500H6" /></Icon>
                </Btn>
            </Group>
            <Group><Btn label="自定义状态栏" className="h-6 w-6"><Hamburger /></Btn></Group>
        </div>
    </footer>
);

const App = () => {
    return (
        <div className="relative flex h-screen flex-col overflow-hidden border border-[#0a95d8] bg-[#222831] font-['Noto_Sans','Noto_Sans_CJK_SC',sans-serif]">
            <TitleBar />
            <RibbonTabs />
            <Ribbon />
            <FileTabs />
            <div className="mx-1 h-[5px] shrink-0 bg-[#3b4453]" />
            <Canvas />
            <div className="mx-1 h-1 shrink-0 bg-[#3b4453]" />
            <StatusBar />
            <div className="pointer-events-none absolute bottom-[9px] right-2 font-['Open_Sans'] text-[25px] font-bold leading-7 text-[#2a9a12]">ITMOP.COM</div>
        </div>
    );
};

export default App;
